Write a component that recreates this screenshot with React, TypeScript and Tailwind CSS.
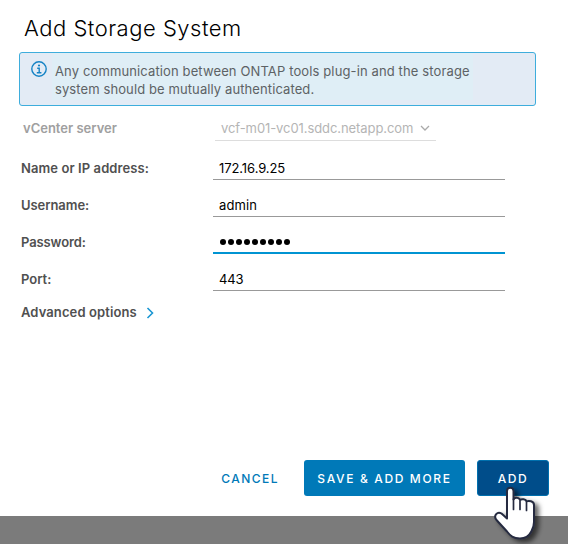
type FieldProps = {
  label: string;
  value: string;
  labelClass: string;
  valueClass: string;
  focused?: boolean;
};

function Field({ label, value, labelClass, valueClass, focused }: FieldProps) {
  return (
    <div className="flex h-[37px] items-start">
      <div className={`w-[192px] shrink-0 pt-[8px] text-[13px] leading-[18px] font-semibold text-[#505050] ${labelClass}`}>
        {label}
      </div>
      <div
        className={`h-[29px] w-[292px] pl-1.5 text-[13px] leading-[18px] text-black ${
          focused ? "border-b-2 border-[#0094d2] pt-[7px]" : "border-b border-[#999999] pt-[8px]"
        }`}
      >
        {focused ? (
          <div className="flex h-[18px] items-center gap-[2px] pl-px pt-px" aria-label="Password">
            {value.split("").map((_, i) => (
              <span key={i} className="size-[6px] rounded-full bg-black" />
            ))}
          </div>
        ) : (
          <span className={valueClass}>{value}</span>
        )}
      </div>
    </div>
  );
}

function HandCursor() {
  return (
    <svg className="absolute left-[490px] top-[482px]" width="60" height="62" viewBox="0 0 60 62" fill="none">
      <defs>
        <filter id="hand-shadow" x="-30%" y="-20%" width="180%" height="160%">
          <feDropShadow dx="4" dy="3" stdDeviation="2.500" floodColor="#000000" floodOpacity="0.6" />
        </filter>
      </defs>
      <g filter="url(#hand-shadow)">
        <path
          d="M17 9c0-4.500 6.500-4.500 6.500 0v8.500c1.500-2.500 6-2 6.500 0.500 1.500-1.500 6-1 6.500 1.500 2-1.200 7.500-0.500 7.500 3.500V40c0 5-1.500 7-3 10-2.500 5-5.500 6.500-11 6.500-7 0-9.500-2.500-13-7L6.500 38C3 33.500 7.500 29 11.500 31.500l5.500 5z"
          fill="#ffffff"
          stroke="#252b40"
          strokeWidth="2"
          strokeLinejoin="round"
        />
        <path d="M23.500 17v10.500M30 19v8.500M36.500 20.500v8" stroke="#252b40" strokeWidth="1.700" strokeLinecap="round" />
      </g>
    </svg>
  );
}

export default function App() {
  return (
    <div className="relative flex h-[544px] w-[568px] flex-col overflow-hidden bg-[#7b7b7b] font-['Inter','Liberation_Sans',sans-serif]">
      <main className="flex h-[516px] flex-col bg-white">
        <h1 className="h-[52px] pl-[24px] pt-[14px] text-[22px] leading-[28px] font-light tracking-[0.5px] whitespace-nowrap text-black">
          Add Storage System
        </h1>

        <div className="ml-[19px] flex h-[54px] w-[517px] rounded-[3px] border border-[#3eaddc] bg-[#e3ebf5]">
          <svg className="ml-[11px] mt-[8px] shrink-0" width="16" height="16" viewBox="0 0 16 16" fill="none" stroke="#1683c5">
            <circle cx="8" cy="8" r="7.200" strokeWidth="1.400" />
            <circle cx="8" cy="4.500" r="1.100" fill="#1683c5" stroke="none" />
            <path d="M6.200 7.200h2v4.300M5.800 11.700h4.600" strokeWidth="1.400" />
          </svg>
          <p className="ml-[5px] h-[47px] w-[421px] bg-[#dfeef6] pl-[3px] pt-[9px] text-[13px] leading-[18px] whitespace-nowrap text-[#5d6265]">
            <span className="tracking-[0.125px]">Any communication between ONTAP tools plug-in and the storage</span>
            <br />
            <span className="tracking-[0.1px]">system should be mutually authenticated.</span>
          </p>
        </div>

        <div className="flex h-[45px] pl-[23px] pt-[13px] text-[13px] leading-[18px]">
          <div className="w-[192px] font-semibold text-[#a0a0a0]">vCenter server</div>
          <div className="flex h-[22px] w-[221px] border-b border-[#dddddd] pl-1.5 whitespace-nowrap text-[#b5b5b5]">
            <span className="tracking-[-0.08px]">vcf-m01-vc01.sddc.netapp.com</span>
            <svg className="ml-auto mr-[6px] mt-[6px] shrink-0" width="10" height="7" viewBox="0 0 10 7" fill="none" stroke="#aaaaaa" strokeWidth="1.300">
              <path d="M1 1l4 4 4-4" />
            </svg>
          </div>
        </div>

        <form className="pl-[21px]">
          <Field label="Name or IP address:" value="172.16.9.25" labelClass="tracking-[0.09px]" valueClass="tracking-[-0.08px]" />
          <Field label="Username:" value="admin" labelClass="tracking-[-0.06px]" valueClass="tracking-[0.1px]" />
          <Field label="Password:" value="*********" labelClass="tracking-[-0.1px]" valueClass="" focused />
          <Field label="Port:" value="443" labelClass="" valueClass="tracking-[-0.2px]" />
          <div className="flex pt-[4px] text-[13px] leading-[18px] font-semibold text-[#505050]">
            <span className="w-[125px] tracking-[0.1px]">Advanced options</span>
            <svg className="mt-[4px]" width="8" height="12" viewBox="0 0 8 12" fill="none" stroke="#1a96d3" strokeWidth="1.600">
              <path d="M1.500 1l5 5-5 5" />
            </svg>
          </div>
        </form>

        <footer className="mt-auto mb-[20px] mr-[19px] flex h-[36px] justify-end text-[12px] font-medium whitespace-nowrap">
          <button className="mr-[25px] pt-px tracking-[1.450px] text-[#0079b8]">CANCEL</button>
          <button className="mr-[12px] w-[161px] rounded-[3px] bg-[#0079b8] pt-px tracking-[1.650px] text-white">SAVE &amp; ADD MORE</button>
          <button className="w-[72px] rounded-[3px] border border-[#0070ae] bg-[#004d8a] pt-px tracking-[1.600px] text-white">ADD</button>
        </footer>
      </main>
      <HandCursor />
    </div>
  );
}
